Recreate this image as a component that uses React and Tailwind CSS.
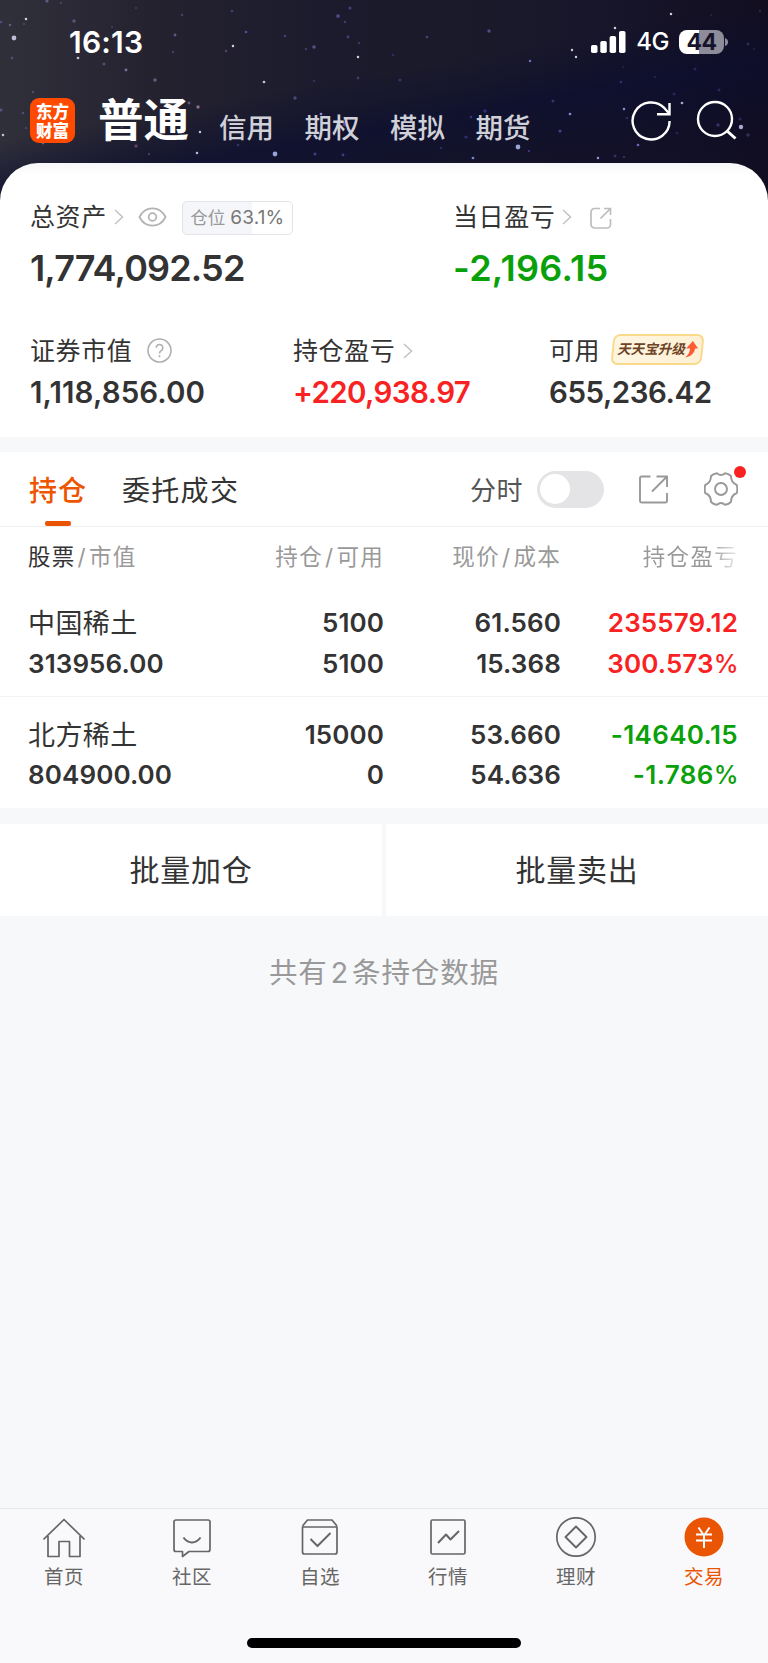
import React from 'react';

const STARS = [
  // x, y, radius, colour
  [14, 38, 2.8, '#dfe2ff'], [26, 19, 1.5, '#ffffff'], [10, 25, 1.5, '#6f6a9c'], [24, 24, 1.3, '#55507a'], [1, 22, 1.5, '#5a5590'],
  [47, 1, 1.8, '#6d6994'], [61, 3, 1.2, '#5d5980'], [74, 21, 2, '#645f8c'], [78, 58, 1.6, '#e8e8ff'], [12, 58, 1.6, '#5c5784'],
  [104, 64, 1.8, '#5d5888'], [126, 70, 1.7, '#8d7fae'], [155, 80, 2, '#77699e'], [33, 92, 1.5, '#5c557e'], [112, 27, 1.2, '#4d4972'],
  [182, 15, 1.5, '#514a80'], [175, 35, 1.7, '#6b66a0'], [173, 52, 1.4, '#4c4673'], [136, 8, 1.2, '#4a4668'], [232, 11, 1.6, '#4c4585'],
  [246, 32, 1.6, '#585bb0'], [233, 46, 1.5, '#ffffff'], [226, 51, 1.4, '#5b546f'], [264, 82, 1.6, '#eef0ff'], [285, 36, 1.6, '#4b4a85'],
  [314, 47, 2.1, '#685a9c'], [306, 49, 1.4, '#4d4178'], [338, 16, 2.2, '#5e55a6'], [350, 8, 1.8, '#504a8d'], [345, 22, 1.4, '#4a4585'],
  [348, 37, 1.7, '#4d488b'], [358, 57, 1.5, '#ffffff'], [359, 43, 1.4, '#453f7b'], [358, 78, 1.7, '#4a4276'], [314, 81, 1.4, '#3a3672'],
  [295, 98, 2, '#57508f'], [321, 114, 1.6, '#a6adff'], [345, 124, 2.8, '#6c53b8'], [1, 110, 1.7, '#605aa3'], [23, 113, 1.5, '#65507e'],
  [3, 135, 1.5, '#e8e8ff'], [26, 128, 1.4, '#504a75'], [43, 143, 1.7, '#7a6b94'], [122, 127, 2, '#453461'], [136, 146, 2, '#704d6f'],
  [149, 154, 1.4, '#504978'], [189, 103, 1.7, '#74698f'], [198, 107, 2, '#a882a8'], [200, 132, 1.5, '#f0efff'], [197, 153, 1.5, '#e6e3ff'],
  [275, 154, 2.8, '#b9c9ff'], [238, 145, 1.5, '#3f3c7c'], [315, 154, 1.8, '#4b4c98'], [343, 155, 1.7, '#4346a0'], [427, 37, 1.6, '#4b4b90'],
  [489, 31, 2, '#6055a3'], [393, 55, 1.4, '#35376e'], [400, 80, 1.8, '#393c81'], [530, 61, 1.5, '#8585d8'], [572, 50, 1.4, '#ffffff'],
  [576, 57, 1.4, '#ffffff'], [615, 28, 1.5, '#ffffff'], [671, 14, 1.5, '#ffffff'], [711, 15, 1.2, '#322b4b'], [748, 44, 1.8, '#3a3060'],
  [760, 11, 1.5, '#332a4b'], [695, 69, 1.8, '#2f2a63'], [754, 49, 1.2, '#30294e'], [621, 82, 1.6, '#3a3879'], [655, 77, 1.5, '#292653'],
  [719, 90, 1.8, '#332d65'], [674, 94, 1.7, '#302c67'], [682, 103, 1.6, '#c4cbff'], [624, 109, 1.5, '#a6acff'], [553, 101, 1.8, '#3e3d7d'],
  [570, 114, 1.6, '#a4a9ff'], [485, 111, 2, '#343984'], [560, 131, 1.9, '#4f4f9e'], [471, 117, 1.5, '#3e409b'], [466, 137, 1.9, '#333986'],
  [518, 147, 2.8, '#bacbff'], [529, 151, 1.3, '#4a5098'], [473, 158, 1.6, '#8ea2ff'], [598, 158, 1.5, '#b1b8ff'], [638, 145, 1.6, '#7e7fe0'],
  [627, 118, 1.6, '#34306e'], [741, 127, 2.6, '#ccd0ff'], [718, 125, 2, '#42387b'], [748, 135, 2, '#40386c'], [740, 119, 1.8, '#312c60'],
  [677, 133, 1.6, '#2f2a5c'], [615, 156, 1.8, '#3f356b'], [624, 157, 1.3, '#4a4283'], [623, 67, 1.2, '#2a285a'], [441, 148, 1.5, '#2f3375'],
];

const MARKETS = ['信用', '期权', '模拟', '期货'];

const HOLDINGS = [
  {
    name: '中国稀土',
    value: '313956.00',
    amount: '5100',
    available: '5100',
    price: '61.560',
    cost: '15.368',
    profit: '235579.12',
    rate: '300.573',
    up: true,
  },
  {
    name: '北方稀土',
    value: '804900.00',
    amount: '15000',
    available: '0',
    price: '53.660',
    cost: '54.636',
    profit: '-14640.15',
    rate: '-1.786',
    up: false,
  },
];

function Chevron() {
  return (
    <svg width="10" height="16" viewBox="0 0 10 16" fill="none" stroke="#c4c4c4" strokeWidth="1.6">
      <path d="M1 1l7.5 7L1 15" />
    </svg>
  );
}

function StatusBar() {
  return (
    <div className="flex h-[84px] items-center pl-[69px] pr-[40px] text-white">
      <span className="text-[30px] font-semibold leading-none tracking-[0.2px]">16:13</span>
      <svg className="ml-auto" width="35" height="22" viewBox="0 0 35 22" fill="#fff">
        <rect x="0" y="14" width="6.5" height="8" rx="1.8" />
        <rect x="9.3" y="10" width="6.5" height="12" rx="1.8" />
        <rect x="18.6" y="5" width="6.5" height="17" rx="1.8" />
        <rect x="28" y="0" width="6.5" height="22" rx="1.8" />
      </svg>
      <span className="ml-[10px] text-[24px] font-medium leading-none tracking-[-0.5px]">4G</span>
      <div className="ml-[10px] flex h-6 w-[45px] items-center justify-center rounded-[8px] bg-linear-to-r from-white from-45% to-[#8e8c99] to-45%">
        <span className="text-[23px] font-bold leading-none tracking-[-0.6px] text-[#15142b]">44</span>
      </div>
      <svg className="ml-[1px]" width="3" height="8" viewBox="0 0 3 8" fill="#8e8c99">
        <path d="M0 0q3 1 3 4t-3 4z" />
      </svg>
    </div>
  );
}

function Header() {
  return (
    <header className="relative h-[163px]">
      <div className="absolute inset-x-0 top-0 h-[215px] bg-[linear-gradient(170deg,transparent_40%,rgba(12,14,48,0.7)_56%,rgba(14,13,38,0.5)_75%,transparent_100%),linear-gradient(90deg,#30303b_0%,#24222f_20%,#1c1b2d_42%,#1b1a2a_60%,#17152a_80%,#120e20_100%)]">
        <svg width="768" height="163" viewBox="0 0 768 163">
          {STARS.map(([x, y, r, color], i) => (
            <circle key={i} cx={x} cy={y} r={r * 0.85} fill={color} opacity="0.8" />
          ))}
        </svg>
      </div>
      <div className="relative">
        <StatusBar />
        <div className="flex h-[79px] items-start pl-[30px] pr-[31px]">
          <div className="mt-[14px] flex h-[45px] w-[45px] flex-col items-center justify-center gap-[2px] rounded-[9px] bg-[#ff4a00] font-[Noto_Sans_CJK_SC,sans-serif] text-[16.500px] font-black text-white">
            <span className="block h-[17px] leading-[17px]">东方</span>
            <span className="block h-[17px] leading-[17px]">财富</span>
          </div>
          <span className="ml-[23px] mt-[13px] text-[45.500px] font-bold leading-[48px] text-white">普通</span>
          <div className="ml-[30px] mt-[29px] flex gap-[30.500px] text-[27.500px] font-medium leading-[30px] text-[#d0d0d8]">
            {MARKETS.map((m) => (
              <span key={m}>{m}</span>
            ))}
          </div>
          <svg className="ml-auto mt-[16px]" width="42" height="42" viewBox="0 0 42 42" fill="none" stroke="#fff" strokeWidth="2.4">
            <path d="M38.600 21A18.500 18.500 0 1 1 33.500 8.200L38.200 13.500" />
            <path d="M38.500 3v11.300H26" />
          </svg>
          <svg className="ml-[22px] mt-[16px]" width="42" height="42" viewBox="0 0 42 42" fill="none" stroke="#fff" strokeWidth="2.4">
            <circle cx="20" cy="19" r="17" />
            <path d="M31.500 30.500l9 8" strokeWidth="3" />
          </svg>
        </div>
      </div>
    </header>
  );
}

function UpgradeBadge() {
  return (
    <div className="-mt-[5px] -ml-[1px] flex h-[31px] w-[91px] -skew-x-6 items-center justify-center rounded-[7px] border-2 border-[#fbd98a] bg-linear-to-r from-[#fff6e2] to-[#fdf0d4] tracking-normal">
      <span className="skew-x-6 text-[13.600px] font-bold italic leading-none text-[#6d4426]">天天宝升级</span>
      <svg className="ml-[2px]" width="12" height="17" viewBox="0 0 12 17" fill="#ff5a36">
        <path d="M6 0l6 7.500H9C8.700 12 6 15.500 0 16.500c3-2.500 4-5.500 4-9H0z" />
      </svg>
    </div>
  );
}

function Summary() {
  return (
    <section className="relative h-[274px] rounded-t-[38px] bg-linear-to-b from-[#f6f7f9] from-0% to-white to-4% pt-[37px] text-[#333]">
      <div className="flex pl-[30px]">
        <div className="w-[423px]">
          <div className="flex h-[36px] items-center text-[25px] tracking-[0.6px]">
            <span>总资产</span>
            <span className="ml-[7px] -mt-[2px]"><Chevron /></span>
            <svg className="ml-[14px] -mt-[2px]" width="29" height="20" viewBox="0 0 30 20" fill="none" stroke="#b3b3b3" strokeWidth="1.8">
              <path d="M1.500 10C4.500 4 9.500 1 15 1s10.500 3 13.500 9C25.500 16 20.500 19 15 19S4.500 16 1.500 10z" />
              <circle cx="15" cy="10" r="4" />
            </svg>
            <div className="ml-[15px] flex h-[34px] w-[111px] items-center justify-center rounded-[5px] border border-[#e3e4e8] bg-linear-to-r from-[#f5f6f9] from-63% to-white to-63% text-[17.500px] tracking-normal text-[#999]">
              仓位<span className="ml-[5px] text-[19px] tracking-[0.200px] text-[#777]">63.1%</span>
            </div>
          </div>
          <div className="mt-[10px] text-[36px] font-semibold leading-[44px] tracking-[-0.850px]">1,774,092.52</div>
        </div>
        <div>
          <div className="flex h-[36px] items-center text-[25px] tracking-[0.6px]">
            <span>当日盈亏</span>
            <span className="ml-[7px] -mt-[2px]"><Chevron /></span>
            <svg className="ml-[18px]" width="22" height="22" viewBox="0 0 22 22" fill="none" stroke="#bdbdbd" strokeWidth="1.7">
              <path d="M10 1.500H4.500a3.500 3.500 0 0 0-3.500 3.500V17.500A3.500 3.500 0 0 0 4.500 21H17a3.500 3.500 0 0 0 3.500-3.500V12" />
              <path d="M14 1.500h6.500V8M20.500 1.500L10.500 11.500" />
            </svg>
          </div>
          <div className="mt-[10px] text-[36px] font-semibold leading-[44px] tracking-[0.300px] text-[#0aa00a]">-2,196.15</div>
        </div>
      </div>

      <div className="mt-[44px] flex pl-[30px]">
        <div className="w-[263px]">
          <div className="flex h-[36px] items-center text-[25px] tracking-[0.6px]">
            <span>证券市值</span>
            <svg className="ml-[15px] -mt-[3px]" width="25" height="25" viewBox="0 0 25 25" fill="none" stroke="#b0b0b0" strokeWidth="1.600">
              <circle cx="12.500" cy="12.500" r="11.500" />
              <path d="M9.200 9.800a3.300 3.300 0 1 1 5.300 2.600c-1.400 1-2 1.500-2 3M12.500 17.200v2" />
            </svg>
          </div>
          <div className="mt-[4px] text-[29.500px] font-semibold leading-[36px] tracking-[0.100px]">1,118,856.00</div>
        </div>
        <div className="w-[256px]">
          <div className="flex h-[36px] items-center text-[25px] tracking-[0.6px]">
            <span>持仓盈亏</span>
            <span className="-mt-[3px] ml-[8px]"><Chevron /></span>
          </div>
          <div className="mt-[4px] text-[29.500px] font-semibold leading-[36px] tracking-[-0.600px] text-[#f92222]">+220,938.97</div>
        </div>
        <div>
          <div className="flex h-[36px] items-center text-[25px] tracking-[0.6px]">
            <span className="mr-[13px]">可用</span>
            <UpgradeBadge />
          </div>
          <div className="mt-[4px] text-[29.500px] font-semibold leading-[36px] tracking-[-0.450px]">655,236.42</div>
        </div>
      </div>
    </section>
  );
}

function Tabs() {
  return (
    <div className="flex h-[75px] items-center border-b border-[#eeeff2] pl-[29px] pr-[30px] text-[28px] tracking-[1px]">
      <div className="relative flex h-full items-center pt-[3px] font-medium text-[#ee5500]">
        持仓
        <span className="absolute bottom-0 left-[16px] h-[5px] w-[26px] rounded-[2px] bg-[#e95504]" />
      </div>
      <span className="ml-[35px] pt-[3px] tracking-[1.300px] text-[#333]">委托成交</span>
      <span className="ml-auto pt-[2px] text-[26px] tracking-[0.5px] text-[#555]">分时</span>
      <div className="ml-[14px] flex h-[37px] w-[67px] items-center rounded-full bg-[#e4e4e7] pl-[3px]">
        <div className="h-[30px] w-[30px] rounded-full bg-white" />
      </div>
      <svg className="ml-[35px]" width="29" height="29" viewBox="0 0 29 29" fill="none" stroke="#999" strokeWidth="1.900">
        <path d="M11.500 1.500H2.500a1.500 1.500 0 0 0-1.500 1.500V26a1.500 1.500 0 0 0 1.500 1.500H26.500a1.500 1.500 0 0 0 1.500-1.500V18" />
        <path d="M17.500 1.500H28V12M28 1.500L13 16.500" />
      </svg>
      <div className="relative ml-[36px]">
        <svg width="34" height="34" viewBox="0 0 34 34" fill="none" stroke="#999" strokeWidth="1.900" strokeLinejoin="round">
          <path d="M32.800 13q1 4 0 8C29 22.500 27 24.500 27 30Q24.500 32.500 21 32.800C18.500 30.500 15.500 30.500 13 32.800Q9.500 32.500 7 30C7 24.500 5 22.500 1.200 21Q.2 17 1.200 13C5 11.500 7 9.500 7 4Q9.500 1.500 13 1.200C15.500 3.500 18.500 3.500 21 1.200Q24.500 1.500 27 4C27 9.500 29 11.500 32.800 13z" />
          <circle cx="17" cy="17" r="6" />
        </svg>
        <span className="absolute -right-[8px] -top-[6px] h-[12px] w-[12px] rounded-full bg-[#f92222]" />
      </div>
    </div>
  );
}

function HoldingsTable() {
  return (
    <div className="text-[#333]">
      <div className="flex h-[58px] items-center pl-[28px] pt-[2px] text-[22.500px] tracking-[1.300px] text-[#999]">
        <span className="w-[176px]">
          <span className="text-[#333]">股票</span>
          <span className="mx-[2px]">/</span>市值
        </span>
        <span className="w-[180px] text-right">持仓<span className="mx-[2px]">/</span>可用</span>
        <span className="w-[177px] text-right">现价<span className="mx-[2px]">/</span>成本</span>
        <span className="w-[177px] bg-linear-to-r from-[#999] from-84% to-[#eee] bg-clip-text text-right text-transparent">持仓盈亏</span>
      </div>
      {HOLDINGS.map((h) => (
        <div
          key={h.name}
          className="flex h-[111.500px] border-b border-[#f2f3f5] pl-[28px] pt-[18px] text-[26px] font-semibold leading-[40.500px] tracking-[0.100px] last:border-b-0"
        >
          <div className="w-[176px]">
            <div className="h-[40.500px] pt-[1px] text-[27px] font-normal tracking-[0.400px]">{h.name}</div>
            <div>{h.value}</div>
          </div>
          <div className="w-[180px] text-right">
            <div>{h.amount}</div>
            <div>{h.available}</div>
          </div>
          <div className="w-[177px] text-right">
            <div>{h.price}</div>
            <div>{h.cost}</div>
          </div>
          <div className={`w-[177px] text-right ${h.up ? 'text-[#f92222]' : 'tracking-[0.350px] text-[#0aa00a]'}`}>
            <div>{h.profit}</div>
            <div>
              {h.rate}
              <span className="text-[25px] font-medium tracking-[-0.500px]">%</span>
            </div>
          </div>
        </div>
      ))}
    </div>
  );
}

function NavIcon({ children }) {
  return (
    <svg width="42" height="42" viewBox="0 0 42 42" fill="none" stroke="#666" strokeWidth="1.700" strokeLinejoin="round">
      {children}
    </svg>
  );
}

const NAV = [
  {
    label: '首页',
    icon: <path d="M.5 22.500L21 2.500l20.500 20M5 19v20.500h11V24.500h10.500v15H37V19" />,
  },
  {
    label: '社区',
    icon: (
      <>
        <path d="M5 3h32a2 2 0 0 1 2 2v27.500a2 2 0 0 1-2 2H18l-6.500 5v-5H5a2 2 0 0 1-2-2V5a2 2 0 0 1 2-2z" />
        <path d="M12.500 20.500c4.500 6.500 12.500 6.500 17 0" strokeWidth="2" />
      </>
    ),
  },
  {
    label: '自选',
    icon: (
      <>
        <path d="M3.500 10V35a2 2 0 0 0 2 2H36a2 2 0 0 0 2-2V10zM3.500 9l5-6H33l5 6" />
        <path d="M11.500 22l7 7L31.500 16" strokeWidth="2" />
      </>
    ),
  },
  {
    label: '行情',
    icon: (
      <>
        <rect x="4" y="3" width="34" height="34" rx="1.500" />
        <path d="M11 26l8-8.500 4.500 5 8.500-8.500" strokeWidth="2" />
      </>
    ),
  },
  {
    label: '理财',
    icon: (
      <>
        <circle cx="21" cy="20" r="19.200" />
        <path d="M21 9.500L31.500 20 21 30.500 10.500 20z" strokeWidth="1.900" />
      </>
    ),
  },
  {
    label: '交易',
    active: true,
    icon: (
      <>
        <circle cx="21" cy="20" r="19.500" fill="#ea5504" stroke="none" />
        <path d="M15.500 10.500l5.500 8 5.500-8M21 18v13M13 17.500h16M13 23.500h16" stroke="#fff" strokeWidth="2" />
      </>
    ),
  },
];

function BottomNav() {
  return (
    <nav className="mt-auto flex h-[155px] flex-col items-center border-t border-[#e5e6e9] bg-[#f9f9fb]">
      <div className="flex w-full pt-[8px]">
        {NAV.map((item) => (
          <div
            key={item.label}
            className={`flex flex-1 flex-col items-center text-[19.500px] leading-[26px] tracking-[0.5px] ${item.active ? 'text-[#ea5504]' : 'text-[#666]'}`}
          >
            <NavIcon>{item.icon}</NavIcon>
            <span className="mt-[5px]">{item.label}</span>
          </div>
        ))}
      </div>
      <div className="mb-[15.500px] mt-auto h-[9.500px] w-[274px] rounded-full bg-black" />
    </nav>
  );
}

export default function App() {
  return (
    <div className="flex h-[1663px] w-[768px] flex-col overflow-hidden bg-[#f7f8fa] font-[Inter,Noto_Sans_CJK_SC,sans-serif]">
      <Header />
      <Summary />
      <main className="mt-[15px] bg-white">
        <Tabs />
        <HoldingsTable />
      </main>
      <div className="mt-[16px] flex gap-[4px] text-[30px] text-[#333]">
        <button className="h-[92px] flex-1 bg-white tracking-[0.8px]">批量加仓</button>
        <button className="h-[92px] flex-1 bg-white tracking-[0.8px]">批量卖出</button>
      </div>
      <p className="mt-[36px] text-center text-[28.500px] leading-[42px] tracking-[0.900px] text-[#999]">
        共有<span className="mx-[3px]">2</span>条持仓数据
      </p>
      <BottomNav />
    </div>
  );
}
